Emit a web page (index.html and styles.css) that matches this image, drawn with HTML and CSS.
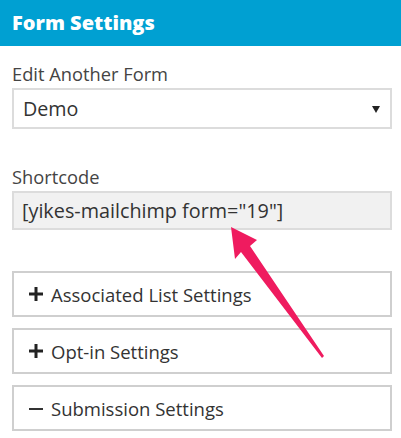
FILE: index.html
```html
<!DOCTYPE html>
<html>
<head>
<meta charset="utf-8">
<link rel="stylesheet" href="styles.css">
</head>
<body>
<div class="panel">
  <div class="panel-header">Form Settings</div>
  <div class="panel-body">
    <div class="label first">Edit Another Form</div>
    <div class="select">
      <span class="select-value">Demo</span>
      <span class="caret"></span>
    </div>
    <div class="label second">Shortcode</div>
    <div class="shortcode">[yikes-mailchimp form="19"]</div>
    <div class="sections">
      <div class="section">
        <svg class="icon" width="14" height="14" viewBox="0 0 14 14"><path d="M0 7H14M7 0V14" stroke="#222" stroke-width="3"/></svg>
        <span>Associated List Settings</span>
      </div>
      <div class="section">
        <svg class="icon" width="14" height="14" viewBox="0 0 14 14"><path d="M0 7H14M7 0V14" stroke="#222" stroke-width="3"/></svg>
        <span>Opt-in Settings</span>
      </div>
      <div class="section">
        <svg class="icon" width="14" height="14" viewBox="0 0 14 14"><path d="M0 8H14" stroke="#333" stroke-width="2"/></svg>
        <span>Submission Settings</span>
      </div>
    </div>
  </div>
  <svg class="arrow" width="401" height="438" viewBox="0 0 401 438">
    <polygon points="231,227 257,240 250,246 324,356 322,358 241,252 235,259" fill="#ef1b5f"/>
  </svg>
</div>
</body>
</html>
```

FILE: styles.css
```css
html, body {
  margin: 0;
  padding: 0;
  background: #fff;
}
body {
  font-family: "Open Sans", "Noto Sans", sans-serif;
  color: #333;
  width: 401px;
  height: 438px;
  overflow: hidden;
}
.panel {
  position: relative;
  height: 438px;
}
.panel-header {
  height: 46px;
  line-height: 46px;
  background: #00a0d2;
  color: #fff;
  font-weight: 800;
  font-size: 20px;
  padding-left: 12px;
}
.panel-body {
  padding: 0 9px 0 12px;
}
.label {
  font-size: 18.3px;
  line-height: 24px;
  color: #444;
  height: 24px;
}
.label.first {
  margin-top: 16px;
}
.label.second {
  margin-top: 36px;
}
.select {
  margin-top: 2px;
  height: 41px;
  box-sizing: border-box;
  border: 2px solid #dcdcdc;
  display: flex;
  align-items: center;
  justify-content: space-between;
  padding: 0 10px 0 9px;
  font-size: 19.7px;
  color: #333;
}
.caret {
  width: 0;
  height: 0;
  border-left: 4px solid transparent;
  border-right: 4px solid transparent;
  border-top: 7px solid #222;
  margin-top: 1px;
}
.shortcode {
  margin-top: 2px;
  height: 39px;
  box-sizing: border-box;
  border: 2px solid #dcdcdc;
  background: #f1f1f1;
  display: flex;
  align-items: center;
  padding: 0 8px;
  font-size: 19.8px;
  color: #333;
}
.sections {
  margin-top: 41px;
  display: flex;
  flex-direction: column;
  gap: 11px;
}
.section {
  height: 46px;
  box-sizing: border-box;
  border: 2px solid #cfcfcf;
  display: flex;
  align-items: center;
  padding-left: 15px;
  font-size: 18.5px;
  color: #333;
}
.icon {
  margin-right: 8px;
  flex: none;
}
.arrow {
  position: absolute;
  left: 0;
  top: 0;
  pointer-events: none;
}
```
